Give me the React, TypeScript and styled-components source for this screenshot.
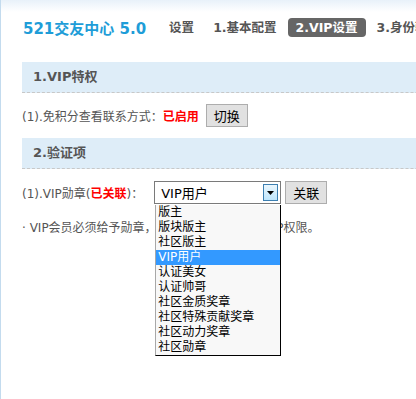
import styled, { createGlobalStyle } from "styled-components"

const GlobalStyle = createGlobalStyle`
    html, body {
        margin: 0;
        padding: 0;
        background: #fff;
        overflow: hidden;
    }
`

const FONT = `"DejaVu Sans", "Noto Sans CJK SC", sans-serif`

const Page = styled.div`
    width: 416px;
    height: 399px;
    box-sizing: border-box;
    border-left: 1px solid #c3dbee;
    background: linear-gradient(#e8f1f9 0px, #ffffff 12px);
    padding-left: 21px;
    font-family: ${FONT};
    font-size: 12px;
    color: #555;
    overflow: hidden;
`
const TopBar = styled.div`
    height: 62px;
    display: flex;
    align-items: center;
    white-space: nowrap;
    padding-bottom: 8px;
    box-sizing: border-box;
`
const Title = styled.div`
    font-size: 15px;
    font-weight: bold;
    color: #1e9dd8;
    margin-right: 15px;
    margin-left: 1px;
`
const NavItem = styled.div<{ $active?: boolean }>`
    font-size: 12.5px;
    font-weight: bold;
    height: 19px;
    line-height: 19px;
    padding: 0 8px;
    margin-right: 3px;
    border-radius: 4px;
    background: ${p => (p.$active ? "#666" : "transparent")};
    color: ${p => (p.$active ? "#fff" : "#555")};
`
const SectionHead = styled.div`
    height: 30px;
    line-height: 30px;
    width: 500px;
    background: #deedf8;
    border-bottom: 1px dashed #c8c8c8;
    padding-left: 11px;
    font-size: 13px;
    font-weight: bold;
    color: #555;
`
const Row = styled.div<{ $h: number }>`
    height: ${p => p.$h}px;
    display: flex;
    align-items: center;
    white-space: nowrap;
`
const Red = styled.b`
    color: #f00;
`
const Button = styled.button<{ $ml: number }>`
    margin-left: ${p => p.$ml}px;
    width: 42px;
    height: 23px;
    padding: 0;
    background: #e1e1e1;
    border: 1px solid #adadad;
    font-family: ${FONT};
    font-size: 13px;
    color: #000;
`
const SelectWrap = styled.div`
    position: relative;
    margin-left: 11px;
`
const SelectBox = styled.div`
    width: 127px;
    height: 23px;
    box-sizing: border-box;
    border: 1px solid #7a7a7a;
    background: #fff;
    display: flex;
    align-items: center;
    padding-left: 6px;
    font-size: 13px;
    color: #000;
`
const ArrowBox = styled.div`
    margin-left: auto;
    margin-right: 2px;
    width: 15px;
    height: 17px;
    box-sizing: border-box;
    border: 1px solid #3c7fb1;
    background: linear-gradient(#eaf6fd, #bee6fd);
    display: flex;
    align-items: center;
    justify-content: center;
`
const DropList = styled.div`
    position: absolute;
    left: 1px;
    top: 24px;
    width: 126px;
    box-sizing: border-box;
    background: #f8f8f8;
    border-left: 1px solid #a8a8a8;
    border-right: 1px solid #000;
    border-bottom: 1px solid #000;
    z-index: 2;
`
const Option = styled.div<{ $selected?: boolean }>`
    height: 15px;
    line-height: 15px;
    padding-left: 2px;
    font-size: 12px;
    color: ${p => (p.$selected ? "#fff" : "#000")};
    background: ${p => (p.$selected ? "#3399ff" : "transparent")};
`
const Note = styled.div`
    height: 24px;
    line-height: 24px;
    white-space: nowrap;
`

const options = ["版主", "版块版主", "社区版主", "VIP用户", "认证美女", "认证帅哥", "社区金质奖章", "社区特殊贡献奖章", "社区动力奖章", "社区勋章"]

export default function App() {
    return (
        <>
            <GlobalStyle />
            <Page>
                <TopBar>
                    <Title>521交友中心 5.0</Title>
                    <NavItem>设置</NavItem>
                    <NavItem>1.基本配置</NavItem>
                    <NavItem $active>2.VIP设置</NavItem>
                    <NavItem>3.身份验证</NavItem>
                </TopBar>
                <SectionHead>1.VIP特权</SectionHead>
                <Row $h={45}>
                    (1).免积分查看联系方式：<Red>已启用</Red>
                    <Button $ml={7}>切换</Button>
                </Row>
                <SectionHead>2.验证项</SectionHead>
                <Row $h={47}>
                    (1).VIP勋章(<Red>已关联</Red>)：
                    <SelectWrap>
                        <SelectBox>
                            VIP用户
                            <ArrowBox>
                                <svg width="7" height="4" viewBox="0 0 7 4">
                                    <path d="M0 0h7L3.5 4z" fill="#000" />
                                </svg>
                            </ArrowBox>
                        </SelectBox>
                        <DropList>
                            {options.map(o => (
                                <Option key={o} $selected={o === "VIP用户"}>{o}</Option>
                            ))}
                        </DropList>
                    </SelectWrap>
                    <Button $ml={4}>关联</Button>
                </Row>
                <Note>· VIP会员必须给予勋章，以便该勋章用户享有VIP权限。</Note>
            </Page>
        </>
    )
}
